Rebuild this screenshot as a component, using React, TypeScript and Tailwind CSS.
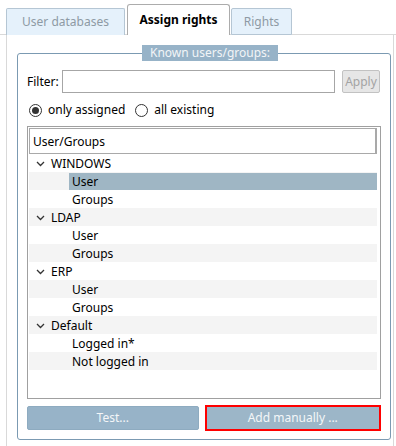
import React from 'react';

type Row = { label: string; level: 0 | 1; selected?: boolean };

const rows: Row[] = [
  { label: 'WINDOWS', level: 0 },
  { label: 'User', level: 1, selected: true },
  { label: 'Groups', level: 1 },
  { label: 'LDAP', level: 0 },
  { label: 'User', level: 1 },
  { label: 'Groups', level: 1 },
  { label: 'ERP', level: 0 },
  { label: 'User', level: 1 },
  { label: 'Groups', level: 1 },
  { label: 'Default', level: 0 },
  { label: 'Logged in*', level: 1 },
  { label: 'Not logged in', level: 1 },
];

const Chevron = () => (
  <svg width="9" height="6" viewBox="0 0 9 6" className="text-[#333]">
    <polyline points="1,1 4.5,4.5 8,1" fill="none" stroke="currentColor" strokeWidth="1.3" />
  </svg>
);

const Radio = ({ checked }: { checked?: boolean }) => (
  <span className="w-[13px] h-[13px] rounded-full border border-[#333] flex items-center justify-center bg-white">
    {checked && <span className="w-[7px] h-[7px] rounded-full bg-[#333]" />}
  </span>
);

export default function App() {
  return (
    <div className="w-[396px] h-[446px] bg-white overflow-hidden text-[12px] text-black" style={{ fontFamily: '"Noto Sans", sans-serif' }}>
      {/* tab strip */}
      <div className="flex items-end h-[35px] pl-[6px] border-b border-[#d9d9d9]">
        <div className="w-[119px] h-[27px] -mb-px border border-b-0 border-[#b5c6d4] bg-[#e5f1fb] rounded-t-[2px] flex items-center justify-center text-[#8e9aa4]">
          User databases
        </div>
        <div className="w-[103px] h-[31px] -mb-px ml-[2px] border border-b-0 border-[#acacac] bg-white rounded-t-[3px] flex items-center justify-center font-bold">
          Assign rights
        </div>
        <div className="w-[61px] h-[27px] -mb-px ml-[1px] border border-b border-[#b5c6d4] bg-[#e5f1fb] rounded-t-[2px] flex items-center justify-center text-[#8e9aa4]">
          Rights
        </div>
      </div>

      {/* tab page */}
      <div className="ml-[6px] w-[388px] h-[420px] border-l border-r border-[#d9d9d9] pt-[18px] pl-[10px]">
        <div className="relative w-[374px] h-[387px] border border-[#7b9ab2] rounded-[3px] pt-[16px] px-[9px]">
          <div className="absolute left-[124px] top-[-9px] h-[16px] px-[8px] bg-[#97b3c8] text-[#f2f5f7] flex items-center leading-none">
            Known users/groups:
          </div>

          {/* filter */}
          <div className="flex items-center h-[23px]">
            <span className="w-[35px]">Filter:</span>
            <div className="w-[273px] h-[23px] border border-[#a6a6a6] bg-white" />
            <div className="ml-[7px] w-[38px] h-[23px] border border-[#c2c2c2] bg-[#e6e6e6] rounded-[2px] flex items-center justify-center text-[#a3a3a3]">
              Apply
            </div>
          </div>

          {/* radios */}
          <div className="flex items-center mt-[10px] h-[14px] pl-[2px]">
            <Radio checked />
            <span className="ml-[6px]">only assigned</span>
            <span className="ml-[10px]"><Radio /></span>
            <span className="ml-[6px]">all existing</span>
          </div>

          {/* tree list */}
          <div className="mt-[9px] w-[354px] h-[273px] border border-[#a0a0a0] p-[1px] pr-[3px] bg-white">
            <div className="h-[26px] border border-[#a9a9a9] border-r-2 flex items-center pl-[3px] pt-[1px]">User/Groups</div>
            {rows.map((r, i) => (
              <div key={i} className={`h-[18px] flex items-center pt-[1px] ${i % 2 === 1 ? 'bg-[#f4f4f4]' : 'bg-white'}`}>
                {r.level === 0 ? (
                  <>
                    <span className="w-[22px] flex justify-center pl-[1px]"><Chevron /></span>
                    <span>{r.label}</span>
                  </>
                ) : (
                  <div className={`ml-[40px] flex-1 h-full flex items-center pl-[3px] ${r.selected ? 'bg-[#9fb6c4]' : ''}`}>
                    {r.label}
                  </div>
                )}
              </div>
            ))}
          </div>

          {/* buttons */}
          <div className="flex items-center mt-[6px]">
            <div className="w-[173px] h-[24px] bg-[#97b3c8] border border-[#8eabc0] rounded-[2px] flex items-center justify-center text-[#f4f6f8]">
              Test...
            </div>
            <div className="ml-[6px] w-[178px] h-[26px] border-2 border-[#ff0000] flex">
              <div className="flex-1 bg-[#9cb6c8] flex items-center justify-center text-[#f4f6f8]">
                Add manually ...
              </div>
            </div>
          </div>
        </div>
      </div>
    </div>
  );
}
